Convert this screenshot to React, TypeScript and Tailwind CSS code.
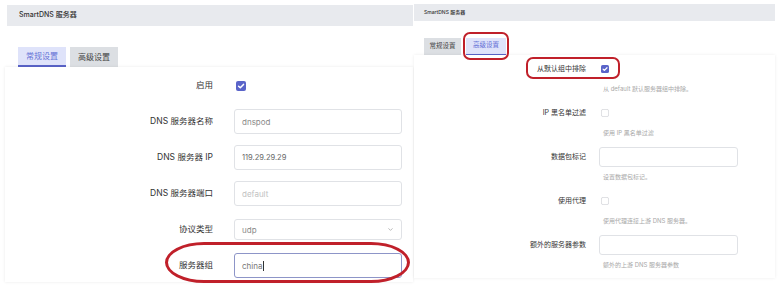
import { ChevronDown } from 'lucide-react';

const font = "font-['Inter','Noto_Sans_CJK_SC',sans-serif]";

function CheckBox({ checked, size }: { checked: boolean; size: number }) {
    return (
        <svg width={size} height={size} viewBox="0 0 10 10">
            {checked ? (
                <>
                    <rect x="0" y="0" width="10" height="10" rx="2" fill="#5a64c9" />
                    <path d="M2.6 5.2 L4.3 6.8 L7.5 3.4" stroke="#fff" strokeWidth="1.5" fill="none" strokeLinecap="round" strokeLinejoin="round" />
                </>
            ) : (
                <rect x="0.5" y="0.5" width="9" height="9" rx="2" fill="#fff" stroke="#d4d6db" />
            )}
        </svg>
    );
}

function LeftPanel() {
    return (
        <div className="w-[413px] pt-[5px] pl-[5px] flex flex-col">
            <div className="ml-[2px] h-[21px] bg-[#e8eaee] flex items-center pl-[12px] text-[7px] font-medium text-[#333]">
                SmartDNS 服务器
            </div>
            <div className="mt-[21px] ml-[13px] flex gap-[4px]">
                <div className="w-[48px] h-[20px] bg-[#dfe3fa] text-[#6571d6] text-[8px] flex items-center justify-center border-b-2 border-[#5a64c9]">
                    常规设置
                </div>
                <div className="w-[48px] h-[20px] bg-[#dcdfe3] text-[#444] text-[8px] flex items-center justify-center">
                    高级设置
                </div>
            </div>
            <div className="h-[215px] bg-white shadow-[0_0_3px_rgba(0,0,0,0.09)] pt-[6px] flex flex-col gap-[11px] text-[8.5px] text-[#333]">
                <div className="h-[25px] grid grid-cols-[208px_168px] gap-x-[21px] items-center">
                    <div className="text-right">启用</div>
                    <div className="pl-[2px] flex items-center"><CheckBox checked size={10} /></div>
                </div>
                <div className="h-[25px] grid grid-cols-[208px_168px] gap-x-[21px] items-center">
                    <div className="text-right">DNS 服务器名称</div>
                    <div className="h-[25px] border border-[#e0e2e6] rounded-[3px] flex items-center px-[7px] text-[#8a8a8a] text-[8px]">dnspod</div>
                </div>
                <div className="h-[25px] grid grid-cols-[208px_168px] gap-x-[21px] items-center">
                    <div className="text-right">DNS 服务器 IP</div>
                    <div className="h-[25px] border border-[#e0e2e6] rounded-[3px] flex items-center px-[7px] text-[#666] text-[7.5px]">119.29.29.29</div>
                </div>
                <div className="h-[25px] grid grid-cols-[208px_168px] gap-x-[21px] items-center">
                    <div className="text-right">DNS 服务器端口</div>
                    <div className="h-[25px] border border-[#e0e2e6] rounded-[3px] flex items-center px-[7px] text-[#c2c2c2] text-[8px]">default</div>
                </div>
                <div className="h-[25px] grid grid-cols-[208px_168px] gap-x-[21px] items-center">
                    <div className="text-right">协议类型</div>
                    <div className="h-[21px] border border-[#e0e2e6] rounded-[3px] flex items-center justify-between px-[7px] text-[#8a8a8a] text-[8px]">
                        udp
                        <ChevronDown size={7} strokeWidth={2} className="text-[#888]" />
                    </div>
                </div>
                <div className="h-[25px] grid grid-cols-[208px_168px] gap-x-[21px] items-center">
                    <div className="text-right">服务器组</div>
                    <div className="h-[25px] border border-[#8d95c8] rounded-[3px] flex items-center px-[7px] text-[#777] text-[8px]">
                        china<span className="w-px h-[10px] bg-[#333] ml-[1px]" />
                    </div>
                </div>
            </div>
        </div>
    );
}

const rightFields = [
    { label: '从默认组中排除', kind: 'check-on', help: '从 default 默认服务器组中排除。' },
    { label: 'IP 黑名单过滤', kind: 'check-off', help: '使用 IP 黑名单过滤' },
    { label: '数据包标记', kind: 'input', help: '设置数据包标记。' },
    { label: '使用代理', kind: 'check-off', help: '使用代理连接上游 DNS 服务器。' },
    { label: '额外的服务器参数', kind: 'input', help: '额外的上游 DNS 服务器参数' },
];

function RightPanel() {
    return (
        <div className="w-[362px] pt-[4px] pl-[1px] flex flex-col">
            <div className="h-[17px] bg-[#e8eaee] flex items-center pl-[10px] text-[5px] font-medium text-[#333]">
                SmartDNS 服务器
            </div>
            <div className="mt-[17px] ml-[10px] flex gap-[5px]">
                <div className="w-[37px] h-[17px] bg-[#dcdfe3] text-[#444] text-[6.5px] flex items-center justify-center">
                    常规设置
                </div>
                <div className="w-[40px] h-[17px] bg-[#dfe3fa] text-[#6571d6] text-[6.5px] flex items-center justify-center border-b-[1.5px] border-[#5a64c9]">
                    高级设置
                </div>
            </div>
            <div className="h-[223px] bg-white shadow-[0_0_3px_rgba(0,0,0,0.08)] pt-[4px] flex flex-col gap-[9px] text-[7px] text-[#333]">
                {rightFields.map((f) => (
                    <div key={f.label} className="grid grid-cols-[172px_139px] gap-x-[13px]">
                        <div className="h-[20px] flex items-center justify-end">{f.label}</div>
                        <div>
                            <div className="h-[20px] flex items-center">
                                {f.kind === 'input' ? (
                                    <div className="w-full h-[20px] border border-[#e0e2e6] rounded-[3px]" />
                                ) : (
                                    <div className="pl-[2px] flex"><CheckBox checked={f.kind === 'check-on'} size={8} /></div>
                                )}
                            </div>
                            <div className="mt-[5px] h-[10px] leading-[10px] pl-[4px] text-[6px] text-[#a8a8a8]">{f.help}</div>
                        </div>
                    </div>
                ))}
            </div>
        </div>
    );
}

export default function App() {
    return (
        <div className={`relative w-[780px] h-[287px] bg-white flex overflow-hidden ${font}`}>
            <LeftPanel />
            <RightPanel />
            {/* red annotation marks */}
            <div className="absolute left-[165px] top-[242px] w-[245px] h-[41px] border-[3px] border-[#c0202a] rounded-[40px/21px]" />
            <div className="absolute left-[463px] top-[32px] w-[46px] h-[28px] border-[2.5px] border-[#c0202a] rounded-[7px]" />
            <div className="absolute left-[526px] top-[57px] w-[94px] h-[22px] border-[2.5px] border-[#c0202a] rounded-[7px]" />
        </div>
    );
}
